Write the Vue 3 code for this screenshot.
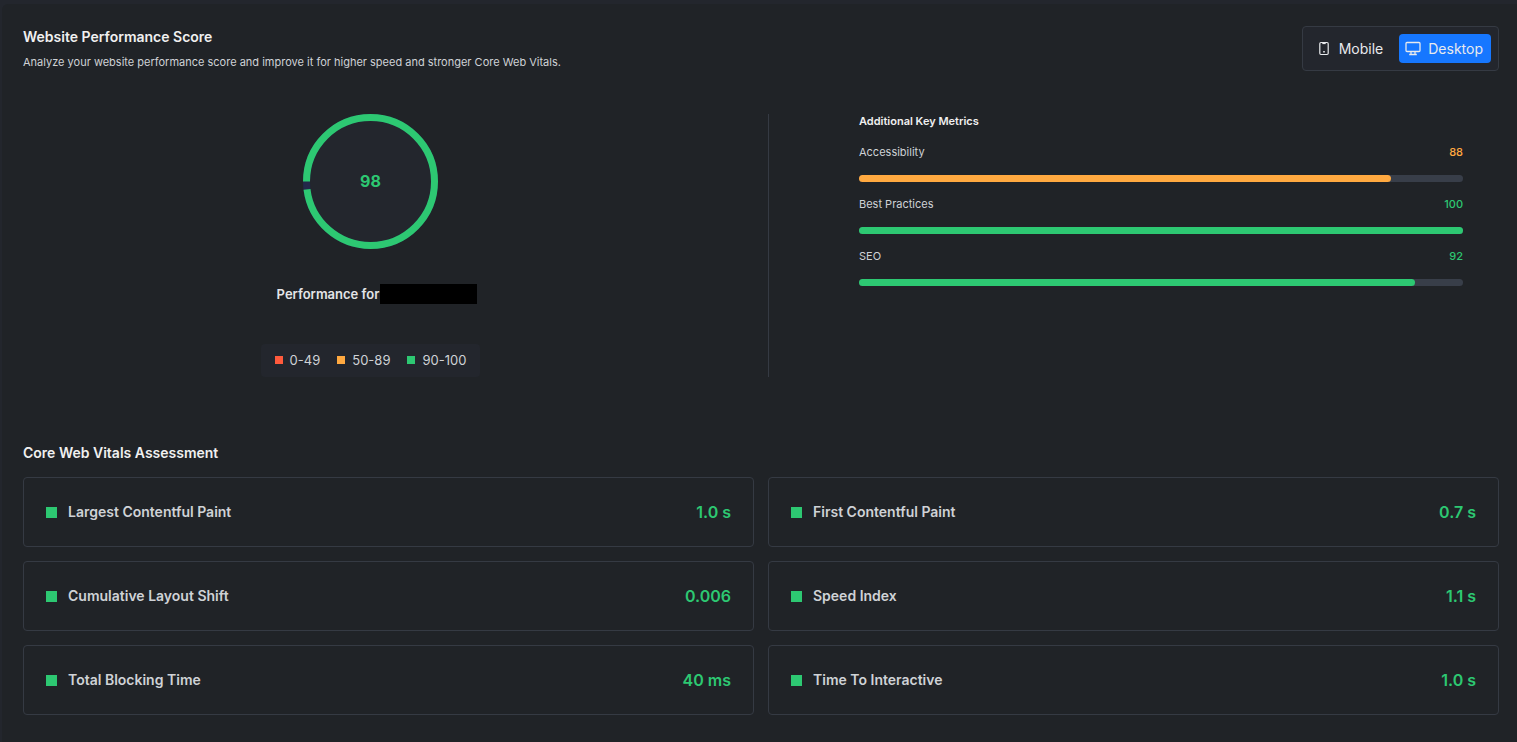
<script setup>
import { ref } from 'vue'

const device = ref('desktop')

const legend = [
  { label: '0-49', tone: 'red' },
  { label: '50-89', tone: 'orange' },
  { label: '90-100', tone: 'green' },
]

const metrics = [
  { label: 'Accessibility', value: 88, tone: 'orange' },
  { label: 'Best Practices', value: 100, tone: 'green' },
  { label: 'SEO', value: 92, tone: 'green' },
]

const vitals = [
  { label: 'Largest Contentful Paint', value: '1.0 s' },
  { label: 'First Contentful Paint', value: '0.7 s' },
  { label: 'Cumulative Layout Shift', value: '0.006' },
  { label: 'Speed Index', value: '1.1 s' },
  { label: 'Total Blocking Time', value: '40 ms' },
  { label: 'Time To Interactive', value: '1.0 s' },
]
</script>

<template>
  <main class="panel">
    <header class="head">
      <div>
        <h1 class="title">Website Performance Score</h1>
        <p class="subtitle">Analyze your website performance score and improve it for higher speed and stronger Core Web Vitals.</p>
      </div>
      <div class="toggle" role="group" aria-label="Device">
        <button type="button" class="device" :class="{ active: device === 'mobile' }" :aria-pressed="device === 'mobile'" @click="device = 'mobile'">
          <svg class="icon" viewBox="0 0 16 16" fill="none" stroke="currentColor" aria-hidden="true">
            <rect x="3.8" y="1.5" width="8.4" height="12" rx="1.2" stroke-width="1.2" />
            <path d="M6.3 2.5h3.4" stroke-width="1.2" />
            <path d="M7.2 10.8h1.6" stroke-width="1.4" />
          </svg>
          Mobile
        </button>
        <button type="button" class="device" :class="{ active: device === 'desktop' }" :aria-pressed="device === 'desktop'" @click="device = 'desktop'">
          <svg class="icon" viewBox="0 0 16 16" fill="none" stroke="currentColor" stroke-width="1.3" aria-hidden="true">
            <rect x="1" y="1.5" width="14" height="9" rx="1" />
            <path d="M6 10.5v3M10 10.5v3M4.2 13.5h7.6" />
          </svg>
          Desktop
        </button>
      </div>
    </header>

    <div class="overview">
      <section class="score">
        <svg class="ring" viewBox="0 0 135 135" role="img" aria-label="Score 98">
          <circle cx="67.5" cy="67.5" r="64" class="ring-base" />
          <circle cx="67.5" cy="67.5" r="64" class="ring-value" pathLength="100" stroke-dasharray="98 2" transform="rotate(-180 67.5 67.5)" />
          <text x="67.5" y="73" class="ring-text">98</text>
        </svg>
        <p class="site">Performance for <span class="redacted"></span></p>
        <ul class="legend">
          <li v-for="item in legend" :key="item.label"><i class="dot" :class="item.tone"></i>{{ item.label }}</li>
        </ul>
      </section>

      <section class="metrics">
        <h2 class="metrics-title">Additional Key Metrics</h2>
        <div v-for="m in metrics" :key="m.label" class="metric">
          <div class="metric-row">
            <span>{{ m.label }}</span>
            <span class="metric-value" :class="'text-' + m.tone">{{ m.value }}</span>
          </div>
          <div class="track"><div class="fill" :class="m.tone" :style="{ width: m.value + '%' }"></div></div>
        </div>
      </section>
    </div>

    <h2 class="title vitals-title">Core Web Vitals Assessment</h2>
    <div class="vitals">
      <article v-for="v in vitals" :key="v.label" class="card">
        <i class="square green"></i>
        <h3 class="card-label">{{ v.label }}</h3>
        <span class="card-value">{{ v.value }}</span>
      </article>
    </div>
  </main>
</template>

<style>
body {
  background: #23262d;
}
</style>

<style scoped>
.panel {
  box-sizing: border-box;
  margin: 4px 0 0 2px;
  min-height: calc(100vh - 4px);
  padding: 22px 18px 24px 21px;
  background: #202327;
  border-radius: 6px 0 0 0;
  font-family: Inter, "Liberation Sans", sans-serif;
  color: #cfd2d6;
}
h1, h2, h3, p, ul {
  margin: 0;
  padding: 0;
}
.head {
  display: flex;
  justify-content: space-between;
  align-items: flex-start;
}
.title {
  font-size: 14px;
  line-height: 22px;
  font-weight: 600;
  color: #f0f0f0;
}
.subtitle {
  margin-top: 6px;
  font-size: 11px;
  line-height: 16px;
}
.toggle {
  display: flex;
  gap: 8px;
  padding: 7px;
  background: #23262d;
  border: 1px solid #353a43;
  border-radius: 4px;
}
.device {
  display: flex;
  align-items: center;
  gap: 7px;
  height: 29px;
  padding: 0 8px 0 6px;
  border: 0;
  border-radius: 4px;
  background: none;
  color: #e8eaed;
  font: 400 14px/20px Inter, "Liberation Sans", sans-serif;
  cursor: pointer;
}
.device.active {
  background: #1677ff;
}
.icon {
  width: 16px;
  height: 16px;
}
.overview {
  display: grid;
  grid-template-columns: 1fr 1fr;
  gap: 14px;
  margin-top: 43px;
}
.score {
  display: flex;
  flex-direction: column;
  align-items: center;
  padding-right: 36px;
}
.ring {
  display: block;
  width: 135px;
  height: 135px;
}
.ring-base {
  fill: #23262d;
  stroke: #23284a;
  stroke-width: 7px;
}
.ring-value {
  fill: none;
  stroke: #2dc872;
  stroke-width: 7px;
}
.ring-text {
  fill: #2dc872;
  font-size: 16px;
  font-weight: 700;
  text-anchor: middle;
}
.site {
  display: flex;
  align-items: center;
  gap: 1px;
  margin: 35px 0 40px 13px;
  font-size: 13px;
  line-height: 20px;
  font-weight: 600;
  color: #e4e5e7;
}
.redacted {
  width: 97px;
  height: 20px;
  background: #000;
}
.legend {
  display: flex;
  gap: 17px;
  padding: 6px 14px 7px;
  list-style: none;
  background: #23262d;
  border-radius: 4px;
  font-size: 13px;
  line-height: 20px;
}
.legend li {
  display: flex;
  align-items: center;
  gap: 7px;
}
.dot {
  width: 8px;
  height: 8px;
}
.metrics {
  border-left: 1px solid #353a43;
  padding: 0 36px 0 90px;
}
.metrics-title {
  margin-bottom: 15px;
  font-size: 11px;
  line-height: 15px;
  font-weight: 600;
  color: #f0f0f0;
}
.metric {
  margin-bottom: 14px;
}
.metric-row {
  display: flex;
  justify-content: space-between;
  margin-bottom: 15px;
  font-size: 11px;
  line-height: 16px;
}
.metric-value {
  font-weight: 500;
}
.track {
  height: 7px;
  border-radius: 4px;
  background: #383e49;
}
.fill {
  height: 100%;
  border-radius: 4px;
}
.red {
  background: #ff5a3c;
}
.orange {
  background: #ffa940;
}
.green {
  background: #2dc872;
}
.text-orange {
  color: #ffa940;
}
.text-green {
  color: #2dc872;
}
.vitals-title {
  margin: 65px 0 13px;
}
.vitals {
  display: grid;
  grid-template-columns: 1fr 1fr;
  gap: 14px;
}
.card {
  display: flex;
  align-items: center;
  padding: 22px;
  border: 1px solid #353a43;
  border-radius: 4px;
}
.square {
  width: 11px;
  height: 11px;
  margin-right: 11px;
}
.card-label {
  flex: 1;
  font-size: 14px;
  line-height: 24px;
  font-weight: 600;
}
.card-value {
  font-size: 16px;
  line-height: 24px;
  font-weight: 600;
  color: #2dc872;
}
</style>
